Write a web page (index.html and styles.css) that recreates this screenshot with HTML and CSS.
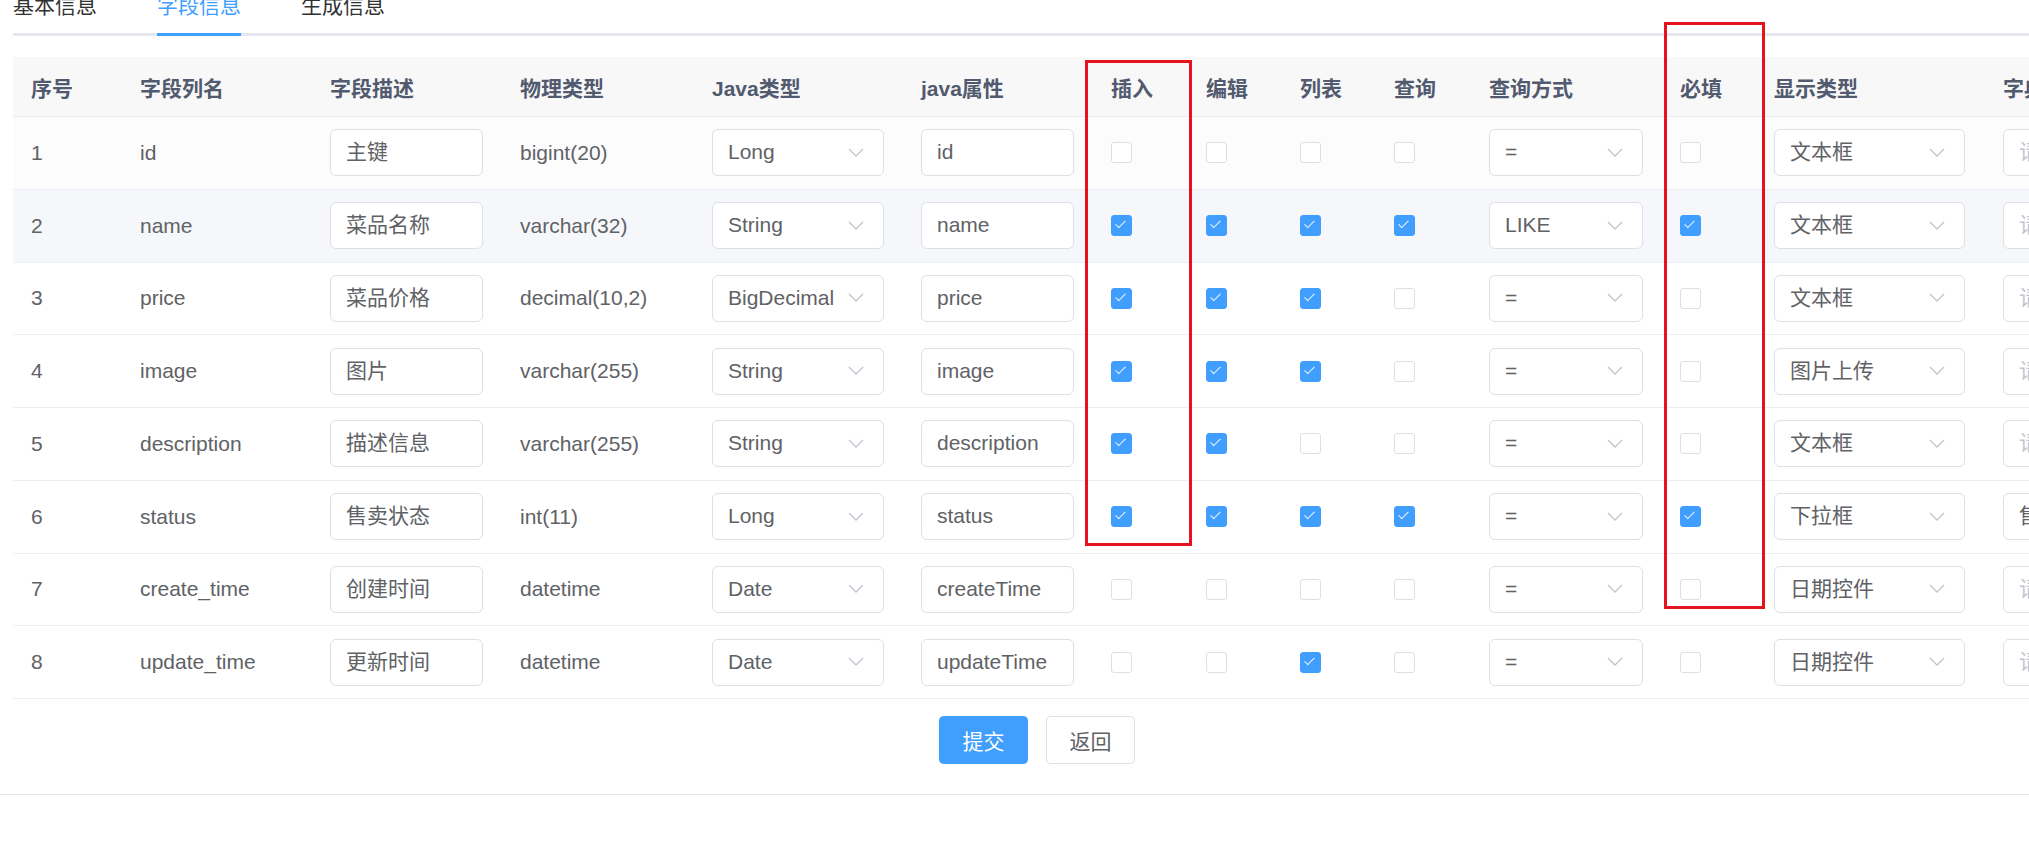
FILE: index.html
```html
<!DOCTYPE html>
<html lang="zh-CN">
<head>
<meta charset="utf-8">
<title>字段信息</title>
<link rel="stylesheet" href="styles.css">
</head>
<body>
<div class="card">
  <div class="tabs">
    <div class="tab">基本信息</div>
    <div class="tab active">字段信息</div>
    <div class="tab">生成信息</div>
  </div>

  <table class="grid">
    <colgroup>
      <col class="c-no"><col class="c-190"><col class="c-190"><col class="c-192"><col class="c-209"><col class="c-190">
      <col class="c-95"><col class="c-94"><col class="c-94"><col class="c-95"><col class="c-191"><col class="c-94"><col class="c-229"><col class="c-190">
    </colgroup>
    <thead>
      <tr>
        <th class="first">序号</th><th>字段列名</th><th>字段描述</th><th>物理类型</th><th>Java类型</th><th>java属性</th>
        <th>插入</th><th>编辑</th><th>列表</th><th>查询</th><th>查询方式</th><th>必填</th><th>显示类型</th><th>字典类型</th>
      </tr>
    </thead>
    <tbody>
      <tr class="r-light">
        <td class="first">1</td><td>id</td>
        <td><div class="inp w153">主键</div></td><td>bigint(20)</td>
        <td><div class="inp sel w172">Long<svg class="arr" viewBox="0 0 16 9"><polyline points="1,1 8,8 15,1"/></svg></div></td>
        <td><div class="inp w153">id</div></td>
        <td><span class="cb"></span></td><td><span class="cb"></span></td><td><span class="cb"></span></td><td><span class="cb"></span></td>
        <td><div class="inp sel w154">=<svg class="arr" viewBox="0 0 16 9"><polyline points="1,1 8,8 15,1"/></svg></div></td>
        <td><span class="cb"></span></td>
        <td><div class="inp sel w191">文本框<svg class="arr" viewBox="0 0 16 9"><polyline points="1,1 8,8 15,1"/></svg></div></td>
        <td><div class="inp sel w191 ph">请选择<svg class="arr" viewBox="0 0 16 9"><polyline points="1,1 8,8 15,1"/></svg></div></td>
      </tr>
      <tr class="r-hover">
        <td class="first">2</td><td>name</td>
        <td><div class="inp w153">菜品名称</div></td><td>varchar(32)</td>
        <td><div class="inp sel w172">String<svg class="arr" viewBox="0 0 16 9"><polyline points="1,1 8,8 15,1"/></svg></div></td>
        <td><div class="inp w153">name</div></td>
        <td><span class="cb on"></span></td><td><span class="cb on"></span></td><td><span class="cb on"></span></td><td><span class="cb on"></span></td>
        <td><div class="inp sel w154">LIKE<svg class="arr" viewBox="0 0 16 9"><polyline points="1,1 8,8 15,1"/></svg></div></td>
        <td><span class="cb on"></span></td>
        <td><div class="inp sel w191">文本框<svg class="arr" viewBox="0 0 16 9"><polyline points="1,1 8,8 15,1"/></svg></div></td>
        <td><div class="inp sel w191 ph">请选择<svg class="arr" viewBox="0 0 16 9"><polyline points="1,1 8,8 15,1"/></svg></div></td>
      </tr>
      <tr>
        <td class="first">3</td><td>price</td>
        <td><div class="inp w153">菜品价格</div></td><td>decimal(10,2)</td>
        <td><div class="inp sel w172">BigDecimal<svg class="arr" viewBox="0 0 16 9"><polyline points="1,1 8,8 15,1"/></svg></div></td>
        <td><div class="inp w153">price</div></td>
        <td><span class="cb on"></span></td><td><span class="cb on"></span></td><td><span class="cb on"></span></td><td><span class="cb"></span></td>
        <td><div class="inp sel w154">=<svg class="arr" viewBox="0 0 16 9"><polyline points="1,1 8,8 15,1"/></svg></div></td>
        <td><span class="cb"></span></td>
        <td><div class="inp sel w191">文本框<svg class="arr" viewBox="0 0 16 9"><polyline points="1,1 8,8 15,1"/></svg></div></td>
        <td><div class="inp sel w191 ph">请选择<svg class="arr" viewBox="0 0 16 9"><polyline points="1,1 8,8 15,1"/></svg></div></td>
      </tr>
      <tr>
        <td class="first">4</td><td>image</td>
        <td><div class="inp w153">图片</div></td><td>varchar(255)</td>
        <td><div class="inp sel w172">String<svg class="arr" viewBox="0 0 16 9"><polyline points="1,1 8,8 15,1"/></svg></div></td>
        <td><div class="inp w153">image</div></td>
        <td><span class="cb on"></span></td><td><span class="cb on"></span></td><td><span class="cb on"></span></td><td><span class="cb"></span></td>
        <td><div class="inp sel w154">=<svg class="arr" viewBox="0 0 16 9"><polyline points="1,1 8,8 15,1"/></svg></div></td>
        <td><span class="cb"></span></td>
        <td><div class="inp sel w191">图片上传<svg class="arr" viewBox="0 0 16 9"><polyline points="1,1 8,8 15,1"/></svg></div></td>
        <td><div class="inp sel w191 ph">请选择<svg class="arr" viewBox="0 0 16 9"><polyline points="1,1 8,8 15,1"/></svg></div></td>
      </tr>
      <tr>
        <td class="first">5</td><td>description</td>
        <td><div class="inp w153">描述信息</div></td><td>varchar(255)</td>
        <td><div class="inp sel w172">String<svg class="arr" viewBox="0 0 16 9"><polyline points="1,1 8,8 15,1"/></svg></div></td>
        <td><div class="inp w153">description</div></td>
        <td><span class="cb on"></span></td><td><span class="cb on"></span></td><td><span class="cb"></span></td><td><span class="cb"></span></td>
        <td><div class="inp sel w154">=<svg class="arr" viewBox="0 0 16 9"><polyline points="1,1 8,8 15,1"/></svg></div></td>
        <td><span class="cb"></span></td>
        <td><div class="inp sel w191">文本框<svg class="arr" viewBox="0 0 16 9"><polyline points="1,1 8,8 15,1"/></svg></div></td>
        <td><div class="inp sel w191 ph">请选择<svg class="arr" viewBox="0 0 16 9"><polyline points="1,1 8,8 15,1"/></svg></div></td>
      </tr>
      <tr>
        <td class="first">6</td><td>status</td>
        <td><div class="inp w153">售卖状态</div></td><td>int(11)</td>
        <td><div class="inp sel w172">Long<svg class="arr" viewBox="0 0 16 9"><polyline points="1,1 8,8 15,1"/></svg></div></td>
        <td><div class="inp w153">status</div></td>
        <td><span class="cb on"></span></td><td><span class="cb on"></span></td><td><span class="cb on"></span></td><td><span class="cb on"></span></td>
        <td><div class="inp sel w154">=<svg class="arr" viewBox="0 0 16 9"><polyline points="1,1 8,8 15,1"/></svg></div></td>
        <td><span class="cb on"></span></td>
        <td><div class="inp sel w191">下拉框<svg class="arr" viewBox="0 0 16 9"><polyline points="1,1 8,8 15,1"/></svg></div></td>
        <td><div class="inp sel w191">售卖状态<svg class="arr" viewBox="0 0 16 9"><polyline points="1,1 8,8 15,1"/></svg></div></td>
      </tr>
      <tr>
        <td class="first">7</td><td>create_time</td>
        <td><div class="inp w153">创建时间</div></td><td>datetime</td>
        <td><div class="inp sel w172">Date<svg class="arr" viewBox="0 0 16 9"><polyline points="1,1 8,8 15,1"/></svg></div></td>
        <td><div class="inp w153">createTime</div></td>
        <td><span class="cb"></span></td><td><span class="cb"></span></td><td><span class="cb"></span></td><td><span class="cb"></span></td>
        <td><div class="inp sel w154">=<svg class="arr" viewBox="0 0 16 9"><polyline points="1,1 8,8 15,1"/></svg></div></td>
        <td><span class="cb"></span></td>
        <td><div class="inp sel w191">日期控件<svg class="arr" viewBox="0 0 16 9"><polyline points="1,1 8,8 15,1"/></svg></div></td>
        <td><div class="inp sel w191 ph">请选择<svg class="arr" viewBox="0 0 16 9"><polyline points="1,1 8,8 15,1"/></svg></div></td>
      </tr>
      <tr>
        <td class="first">8</td><td>update_time</td>
        <td><div class="inp w153">更新时间</div></td><td>datetime</td>
        <td><div class="inp sel w172">Date<svg class="arr" viewBox="0 0 16 9"><polyline points="1,1 8,8 15,1"/></svg></div></td>
        <td><div class="inp w153">updateTime</div></td>
        <td><span class="cb"></span></td><td><span class="cb"></span></td><td><span class="cb on"></span></td><td><span class="cb"></span></td>
        <td><div class="inp sel w154">=<svg class="arr" viewBox="0 0 16 9"><polyline points="1,1 8,8 15,1"/></svg></div></td>
        <td><span class="cb"></span></td>
        <td><div class="inp sel w191">日期控件<svg class="arr" viewBox="0 0 16 9"><polyline points="1,1 8,8 15,1"/></svg></div></td>
        <td><div class="inp sel w191 ph">请选择<svg class="arr" viewBox="0 0 16 9"><polyline points="1,1 8,8 15,1"/></svg></div></td>
      </tr>
    </tbody>
  </table>

  <div class="actions">
    <button class="btn primary">提交</button>
    <button class="btn">返回</button>
  </div>

  <div class="mark mark-insert"></div>
  <div class="mark mark-required"></div>
</div>
</body>
</html>
```

FILE: styles.css
```css
html, body {
  margin: 0;
  padding: 0;
  background: #ffffff;
  overflow: hidden;
  font-family: "Liberation Sans", "Noto Sans CJK SC", sans-serif;
  font-size: 21px;
  color: #606266;
}

.card {
  position: relative;
  width: 2061px;
  margin-top: -24px;
  padding: 0 0 30px 13px;
  box-sizing: border-box;
  background: #ffffff;
  border-bottom: 1px solid #e4e7ed;
  box-shadow: 0 6px 16px rgba(0, 0, 0, 0.09);
}

.tabs {
  display: flex;
  height: 60px;
  box-shadow: inset 0 -3px 0 #e4e7ed;
  margin-bottom: 21px;
}

.tab {
  position: relative;
  height: 60px;
  line-height: 60px;
  padding: 0 30px;
  color: #303133;
  white-space: nowrap;
}

.tab:first-child { padding-left: 0; }

.tab.active { color: #409eff; }

.tab.active::after {
  content: "";
  position: absolute;
  left: 30px;
  right: 30px;
  bottom: 0;
  height: 3px;
  background: #409eff;
}

.grid {
  border-collapse: collapse;
  table-layout: fixed;
  width: 2165px;
}

.c-no { width: 112px; }
.c-190 { width: 190px; }
.c-192 { width: 192px; }
.c-209 { width: 209px; }
.c-95 { width: 95px; }
.c-94 { width: 94px; }
.c-191 { width: 191px; }
.c-229 { width: 229px; }

.grid th {
  height: 59px;
  padding: 0 15px;
  background: #f8f8f9;
  color: #515a6e;
  font-weight: bold;
  text-align: left;
  border-bottom: 1px solid #e8ebf1;
  white-space: nowrap;
  overflow: hidden;
}

.grid td {
  height: 72px;
  padding: 0 15px;
  border-bottom: 1px solid #ebeef5;
  white-space: nowrap;
  overflow: hidden;
  box-sizing: border-box;
}

.grid tbody tr { height: 72.75px; }

.grid .first { padding-left: 18px; }

.r-light td { background: #fcfcfd; }
.r-hover td { background: #f6f7fa; }

.inp {
  position: relative;
  height: 47px;
  line-height: 44px;
  box-sizing: border-box;
  border: 1.5px solid #dcdfe6;
  border-radius: 6px;
  background: #ffffff;
  padding: 0 15px;
  color: #606266;
  overflow: hidden;
  white-space: nowrap;
}

.sel { padding-right: 44px; }
.ph { color: #c0c4cc; }

.w153 { width: 153px; }
.w154 { width: 154px; }
.w172 { width: 172px; }
.w191 { width: 191px; }

.arr {
  position: absolute;
  right: 19px;
  top: 50%;
  width: 16px;
  height: 9px;
  margin-top: -5px;
  fill: none;
  stroke: #c0c4cc;
  stroke-width: 1.3;
}

.cb {
  position: relative;
  display: block;
  width: 21px;
  height: 21px;
  box-sizing: border-box;
  border: 1.5px solid #dcdfe6;
  border-radius: 3px;
  background: #ffffff;
}

.cb.on {
  background: #409eff;
  border-color: #409eff;
}

.cb.on::after {
  content: "";
  position: absolute;
  left: 6px;
  top: 2px;
  width: 4px;
  height: 9px;
  border-right: 1.5px solid #e8f3ff;
  border-bottom: 1.5px solid #e8f3ff;
  transform: rotate(45deg);
}

.actions {
  display: flex;
  justify-content: center;
  gap: 18px;
  padding-top: 17px;
}

.btn {
  height: 48px;
  padding: 0 22.5px;
  font-family: inherit;
  font-size: 21px;
  border: 1.5px solid #dcdfe6;
  border-radius: 4.5px;
  background: #ffffff;
  color: #606266;
}

.btn.primary {
  background: #409eff;
  border-color: #409eff;
  color: #ffffff;
}

.mark {
  position: absolute;
  border: 3px solid #e5131d;
  box-sizing: border-box;
}

.mark-insert {
  left: 1085px;
  top: 84px;
  width: 107px;
  height: 486px;
}

.mark-required {
  left: 1664px;
  top: 46px;
  width: 101px;
  height: 587px;
}
```
